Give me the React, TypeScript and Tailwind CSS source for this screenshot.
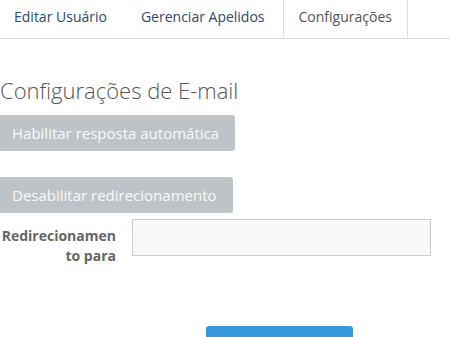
const font = { fontFamily: '"Open Sans", "Noto Sans", sans-serif' };

const tabs = ["Editar Usuário", "Gerenciar Apelidos", "Configurações"];

export default function App() {
  return (
    <div className="h-[337px] w-[450px] overflow-hidden bg-white" style={font}>
      <ul className="-mt-1 flex border-b border-[#dddddd] pl-0">
        {tabs.map((t, i) =>
          i === 2 ? (
            <li key={t} className="-mb-px mr-0.5">
              <span className="block rounded-t border border-[#dddddd] border-b-white bg-white px-[15px] py-[10px] text-[14px] leading-5 text-[#555555]">
                {t}
              </span>
            </li>
          ) : (
            <li key={t} className={i === 0 ? "-ml-0.5 mr-0.5" : "mr-0.5"}>
              <span className="block border border-transparent px-[15px] py-[10px] text-[14px] leading-5 text-[#2c4a6e]">
                {t}
              </span>
            </li>
          )
        )}
      </ul>

      <div className="pt-[39px]">
        <h3 className="text-[22px] font-light leading-6 text-[#555555]">
          Configurações de E-mail
        </h3>
        <div className="mt-[13px] flex flex-col items-start gap-[26px]">
          <button className="-ml-1 rounded-[3px] bg-[#bdc3c7] px-4 py-2 text-[15px] leading-5 text-white/90">
            Habilitar resposta automática
          </button>
          <button className="-ml-1 rounded-[3px] bg-[#bdc3c7] px-4 py-2 text-[15px] leading-5 text-white/90">
            Desabilitar redirecionamento
          </button>
        </div>

        <div className="mt-[6px] flex items-start">
          <label className="w-[116px] pt-[7px] text-right text-[14px] font-bold leading-5 text-[#666666]">
            Redirecionamen
            <br />
            to para
          </label>
          <input className="ml-4 h-[37px] w-[299px] border border-[#cccccc] bg-[#f9f9f9] px-2 text-[13px] outline-none" />
        </div>

        <div className="mt-[60px] flex">
          <button className="ml-[206px] h-[30px] w-[147px] rounded-t-[3px] bg-[#3498db]" />
        </div>
      </div>
    </div>
  );
}
